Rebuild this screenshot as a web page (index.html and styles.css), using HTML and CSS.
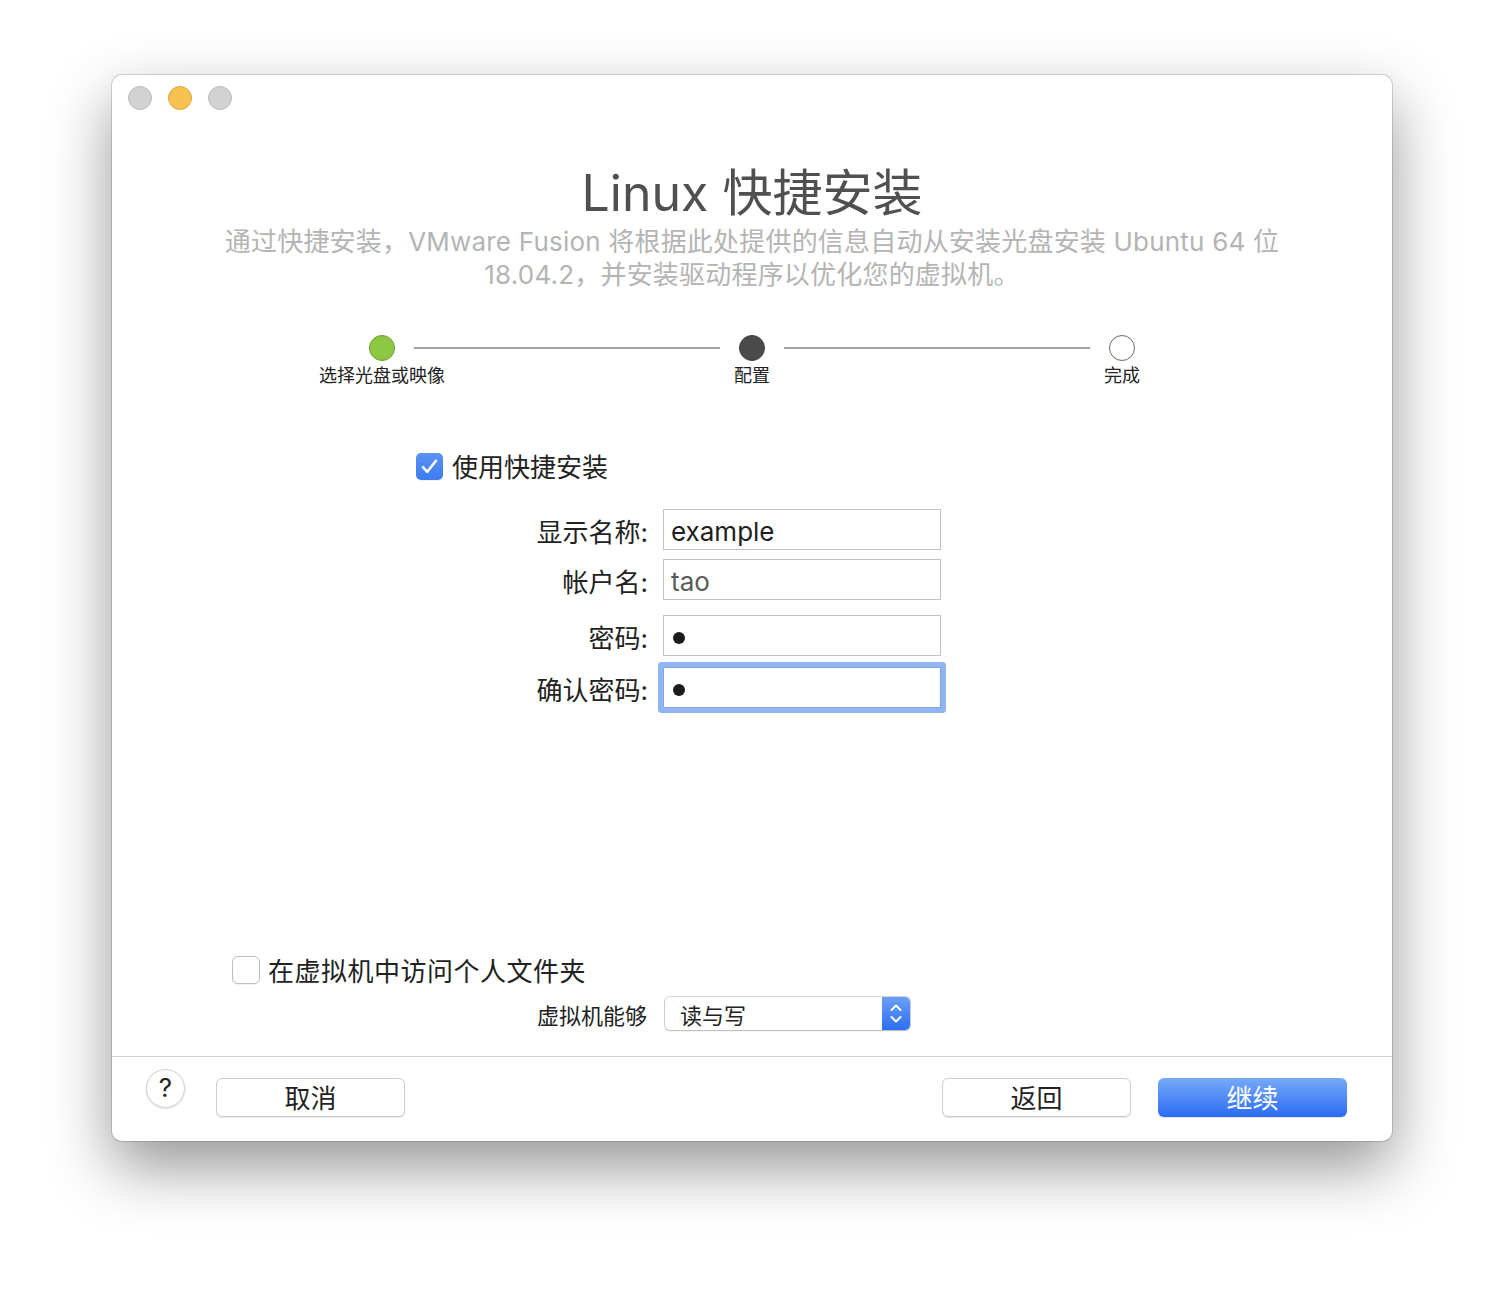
FILE: index.html
```html
<!DOCTYPE html>
<html lang="zh-CN">
<head>
<meta charset="utf-8">
<title>Linux 快捷安装</title>
<link rel="stylesheet" href="styles.css">
</head>
<body>
<div class="stage">
  <div class="window">
    <div class="titlebar">
      <span class="light gray"></span>
      <span class="light yellow"></span>
      <span class="light gray"></span>
    </div>
    <div class="content">
      <h1 class="title">Linux 快捷安装</h1>
      <p class="subtitle">通过快捷安装，VMware Fusion 将根据此处提供的信息自动从安装光盘安装 Ubuntu 64 位<br>18.04.2，并安装驱动程序以优化您的虚拟机。</p>

      <div class="steps-track">
        <span class="dot done"></span>
        <span class="line"></span>
        <span class="dot current"></span>
        <span class="line"></span>
        <span class="dot todo"></span>
      </div>
      <div class="steps-labels">
        <span>选择光盘或映像</span>
        <span>配置</span>
        <span>完成</span>
      </div>

      <div class="check-row easy">
        <span class="checkbox checked">
          <svg viewBox="0 0 27 27" width="27" height="27"><path d="M7 14.2 L11.3 18.8 L20 7.8" fill="none" stroke="#fff" stroke-width="2.6" stroke-linecap="round" stroke-linejoin="round"/></svg>
        </span>
        <span class="check-text">使用快捷安装</span>
      </div>

      <div class="form">
        <div class="row">
          <span class="label">显示名称:</span>
          <span class="field">example</span>
        </div>
        <div class="row r2">
          <span class="label">帐户名:</span>
          <span class="field muted">tao</span>
        </div>
        <div class="row r3">
          <span class="label">密码:</span>
          <span class="field"><span class="pw-dot"></span></span>
        </div>
        <div class="row r4">
          <span class="label">确认密码:</span>
          <span class="field focused"><span class="pw-dot"></span></span>
        </div>
      </div>

      <div class="bottom">
        <div class="check-row share">
          <span class="checkbox"></span>
          <span class="check-text wide">在虚拟机中访问个人文件夹</span>
        </div>
        <div class="select-row">
          <span class="select-label">虚拟机能够</span>
          <div class="select">
            <span class="select-value">读与写</span>
            <span class="stepper">
              <svg viewBox="0 0 28 33" width="28" height="33"><path d="M9.5 13 L14 8.5 L18.5 13 M9.5 20 L14 24.5 L18.5 20" fill="none" stroke="#fff" stroke-width="2" stroke-linecap="round" stroke-linejoin="round"/></svg>
            </span>
          </div>
        </div>
      </div>
    </div>
    <div class="footer">
      <span class="help">?</span>
      <button class="btn cancel">取消</button>
      <span class="spacer"></span>
      <button class="btn">返回</button>
      <button class="btn primary">继续</button>
    </div>
  </div>
</div>
</body>
</html>
```

FILE: styles.css
```css
* { box-sizing: border-box; }

html, body {
  margin: 0;
  padding: 0;
  background: #ffffff;
}

body {
  font-family: Inter, "Noto Sans CJK SC", sans-serif;
  color: #222;
}

.stage {
  padding: 75px 0 0 112px;
  height: 1290px;
}

.window {
  width: 1280px;
  height: 1066px;
  background: #fff;
  border-radius: 10px;
  box-shadow: 0 0 0 1px rgba(0, 0, 0, 0.14), 0 26px 62px rgba(0, 0, 0, 0.42);
  display: flex;
  flex-direction: column;
  overflow: hidden;
}

/* title bar */
.titlebar {
  height: 46px;
  padding: 11px 0 0 16px;
  display: flex;
  gap: 16px;
  flex: none;
}

.light {
  width: 24px;
  height: 24px;
  border-radius: 50%;
  display: block;
}
.light.gray {
  background: #d2d2d2;
  border: 1px solid #bcbcbc;
}
.light.yellow {
  background: #f6c250;
  border: 1px solid #dfa73c;
}

/* content */
.content {
  flex: 1;
  display: flex;
  flex-direction: column;
}

.title {
  margin: 42px 0 0;
  font-size: 50px;
  line-height: 60px;
  font-weight: 400;
  color: #505050;
  text-align: center;
}

.subtitle {
  margin: 2px 0 0;
  font-size: 26px;
  line-height: 33px;
  letter-spacing: 0.2px;
  color: #b4b4b4;
  text-align: center;
  white-space: nowrap;
}

/* steps */
.steps-track {
  margin: 44px auto 0;
  width: 766px;
  height: 26px;
  display: flex;
  align-items: center;
  gap: 19px;
}

.dot {
  width: 26px;
  height: 26px;
  border-radius: 50%;
  flex: none;
}
.dot.done {
  background: #8dc843;
  border: 1px solid #6c9b32;
}
.dot.current {
  background: #4a4a4a;
  border: 1px solid #3e3e3e;
}
.dot.todo {
  background: #fff;
  border: 1px solid #6a6a6a;
}

.line {
  flex: 1;
  height: 2px;
  background: #a3a3a3;
}

.steps-labels {
  margin: 3px 85px 0;
  display: grid;
  grid-template-columns: 1fr 1fr 1fr;
  font-size: 18px;
  line-height: 24px;
  text-align: center;
  color: #222;
}

/* checkboxes */
.check-row {
  display: flex;
  align-items: center;
  height: 30px;
}
.check-row.easy {
  margin-top: 63px;
  padding-left: 304px;
  gap: 9px;
}
.check-row.share {
  padding-left: 120px;
  gap: 8px;
}

.checkbox {
  width: 28px;
  height: 28px;
  border-radius: 6px;
  background: #fff;
  border: 1px solid #bdbdbd;
  box-shadow: 0 1px 1px rgba(0, 0, 0, 0.06);
  flex: none;
  display: flex;
}
.checkbox.checked {
  width: 27px;
  height: 27px;
  border: none;
  border-radius: 5px;
  background: linear-gradient(#5a93f3, #3d7cee);
}

.check-text {
  font-size: 26px;
  line-height: 30px;
  color: #222;
  padding-top: 3px;
}
.check-text.wide {
  letter-spacing: 0.5px;
}

/* form */
.form {
  margin: 28px 0 0 388px;
  display: flex;
  flex-direction: column;
}

.row {
  display: flex;
  align-items: center;
  height: 41px;
}
.row.r2 { margin-top: 9px; }
.row.r3 { margin-top: 15px; }
.row.r4 { margin-top: 11px; }

.label {
  width: 148px;
  margin-right: 15px;
  text-align: right;
  font-size: 26px;
  color: #222;
  padding-top: 1px;
}

.field {
  width: 278px;
  height: 41px;
  border: 1px solid #c3c3c3;
  background: #fff;
  padding: 4px 0 0 7px;
  font-size: 26px;
  line-height: 35px;
  color: #1e1e1e;
  display: flex;
  align-items: center;
}
.field.muted {
  color: #5a5a5a;
}
.field.focused {
  border-color: #7fa3ea;
  border-radius: 1px;
  box-shadow: 0 0 0 5px #92b4f3;
}

.pw-dot {
  width: 12px;
  height: 12px;
  border-radius: 50%;
  background: #1c1c1c;
  margin-left: 2px;
}

/* bottom options */
.bottom {
  margin-top: auto;
  padding-bottom: 26px;
}

.select-row {
  margin-top: 12px;
  display: flex;
  align-items: center;
  padding-left: 388px;
  height: 33px;
}

.select-label {
  width: 147px;
  text-align: right;
  font-size: 22px;
  color: #222;
  margin-right: 18px;
}

.select {
  width: 245px;
  height: 33px;
  border-radius: 5px;
  background: #fff;
  box-shadow: 0 0 0 1px rgba(0, 0, 0, 0.16), 0 1px 2px rgba(0, 0, 0, 0.14);
  display: flex;
  align-items: center;
  overflow: hidden;
}

.select-value {
  flex: 1;
  padding-left: 15px;
  font-size: 22px;
  color: #222;
}

.stepper {
  width: 28px;
  height: 33px;
  background: linear-gradient(#6b9ff7, #2d6ef3);
  display: flex;
}

/* footer */
.footer {
  flex: none;
  height: 85px;
  border-top: 1px solid #d3d3d3;
  padding: 12px 45px 0 34px;
  display: flex;
  align-items: flex-start;
}

.help {
  width: 39px;
  height: 39px;
  border-radius: 50%;
  background: #fff;
  border: 1px solid #cfcfcf;
  box-shadow: 0 1px 2px rgba(0, 0, 0, 0.12);
  display: flex;
  align-items: center;
  justify-content: center;
  font-size: 26px;
  color: #222;
  line-height: 1;
  padding-bottom: 2px;
}

.btn {
  margin-top: 9px;
  width: 189px;
  height: 39px;
  border-radius: 6px;
  background: #fff;
  border: 1px solid #cdcdcd;
  box-shadow: 0 1px 1px rgba(0, 0, 0, 0.1);
  font-family: Inter, "Noto Sans CJK SC", sans-serif;
  font-size: 26px;
  line-height: 1;
  color: #222;
  padding: 2px 0 0;
  display: flex;
  align-items: center;
  justify-content: center;
}

.btn.cancel {
  margin-left: 31px;
}

.btn.primary {
  margin-left: 27px;
  border: none;
  color: #fff;
  background: linear-gradient(#77a9f8, #2b6cf4);
  box-shadow: 0 1px 1px rgba(0, 0, 0, 0.12);
}

.spacer {
  flex: 1;
}
```
